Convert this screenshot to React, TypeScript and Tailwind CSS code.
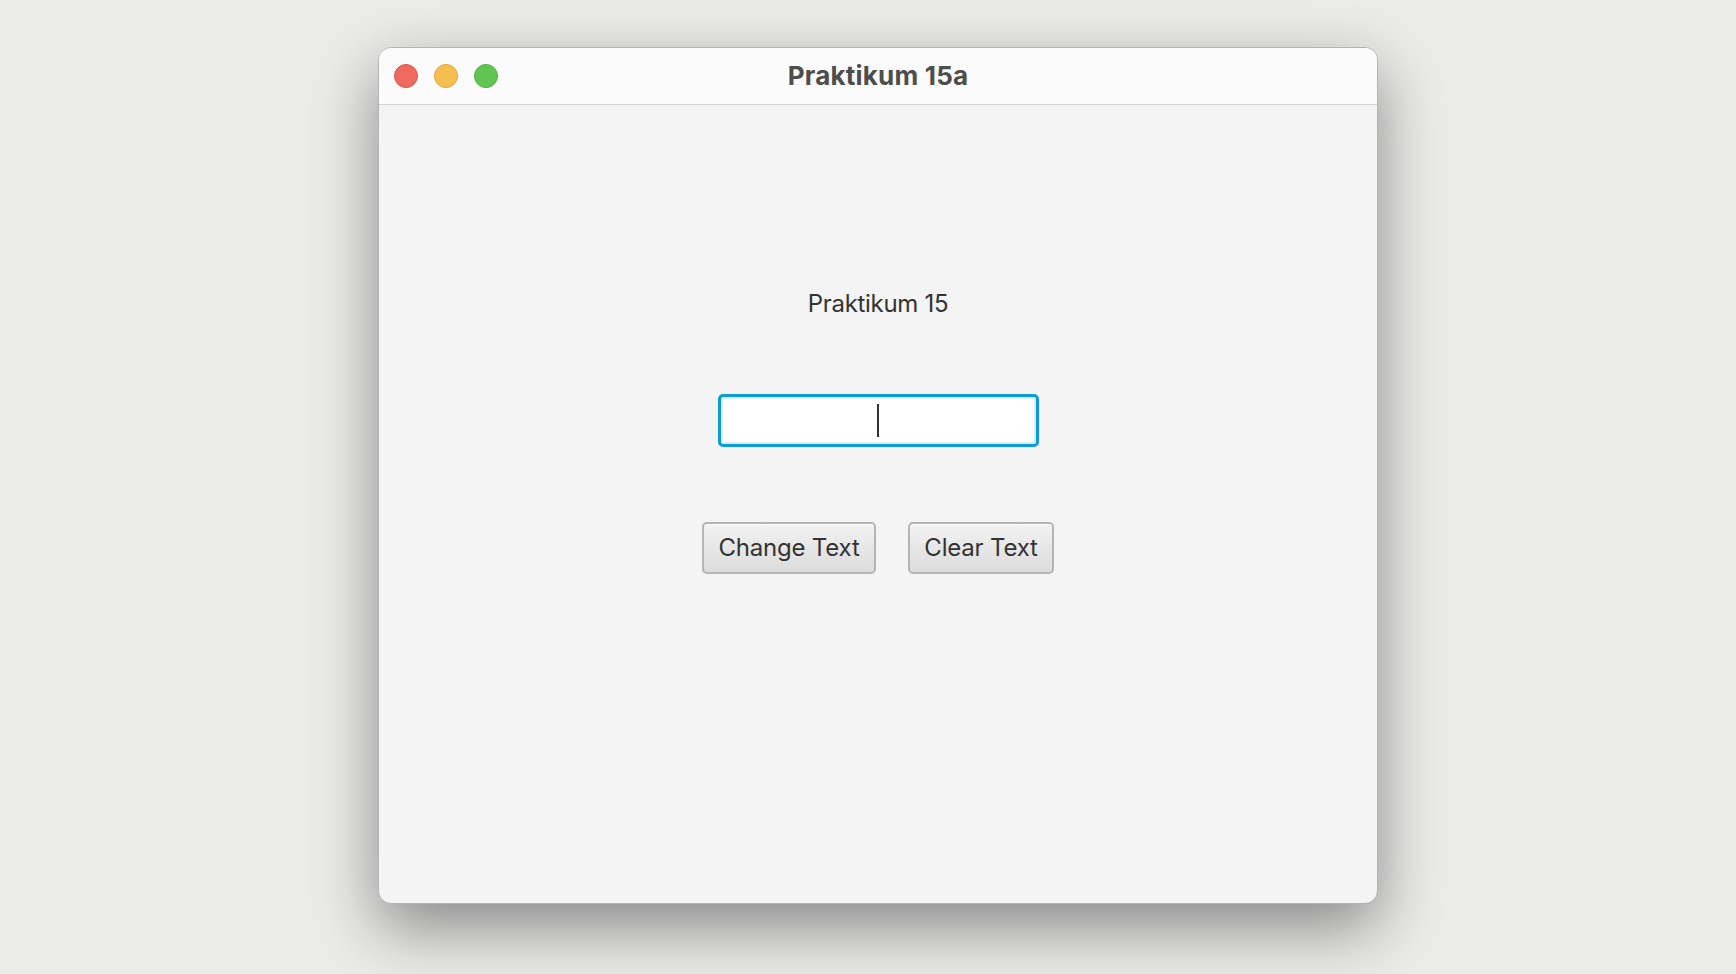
export default function App() {
  return (
    <div className="min-h-[974px] w-full bg-[#ebebea] pt-[47px] pl-[378px] font-['Inter','Noto_Sans',sans-serif]">
      <div className="flex h-[857px] w-[1000px] flex-col overflow-hidden rounded-[13px] border border-[#b3b3b3] bg-[#f4f4f4] shadow-[0_24px_64px_rgba(0,0,0,0.42)]">
        {/* title bar */}
        <div className="relative flex h-[57px] shrink-0 items-center justify-center border-b border-[#d3d3d3] bg-[#fbfbfb]">
          <div className="absolute left-[15px] top-[16px] flex gap-[16px]">
            <span className="h-[24px] w-[24px] rounded-full border border-[#d9574a] bg-[#ed6a5e]" />
            <span className="h-[24px] w-[24px] rounded-full border border-[#dfa53c] bg-[#f5bf4f]" />
            <span className="h-[24px] w-[24px] rounded-full border border-[#4fae42] bg-[#61c554]" />
          </div>
          <span className="text-[26px] font-bold leading-none tracking-[0.2px] text-[#4d4d4d]">Praktikum 15a</span>
        </div>

        {/* content */}
        <div className="flex flex-1 flex-col items-center pt-[184px]">
          <div className="text-[24px] leading-[29px] tracking-[-0.3px] text-[#333333]">Praktikum 15</div>

          <div className="mt-[76px] flex h-[53px] w-[321px] items-center justify-center rounded-[5px] border-[3px] border-[#0b9cd6] bg-white shadow-[inset_0_0_0_2px_#dcedf6]">
            <span className="h-[33px] w-[2px] bg-[#333333]" />
          </div>

          <div className="mt-[75px] flex gap-[32px]">
            <button className="h-[52px] w-[174px] rounded-[5px] border-2 border-[#b4b4b4] bg-gradient-to-b from-[#f2f2f2] to-[#dcdcdc] text-[24px] tracking-[-0.2px] text-[#333333] shadow-[inset_0_1px_0_#ffffff]">
              Change Text
            </button>
            <button className="h-[52px] w-[146px] rounded-[5px] border-2 border-[#b4b4b4] bg-gradient-to-b from-[#f2f2f2] to-[#dcdcdc] text-[24px] tracking-[-0.2px] text-[#333333] shadow-[inset_0_1px_0_#ffffff]">
              Clear Text
            </button>
          </div>
        </div>
      </div>
    </div>
  );
}
